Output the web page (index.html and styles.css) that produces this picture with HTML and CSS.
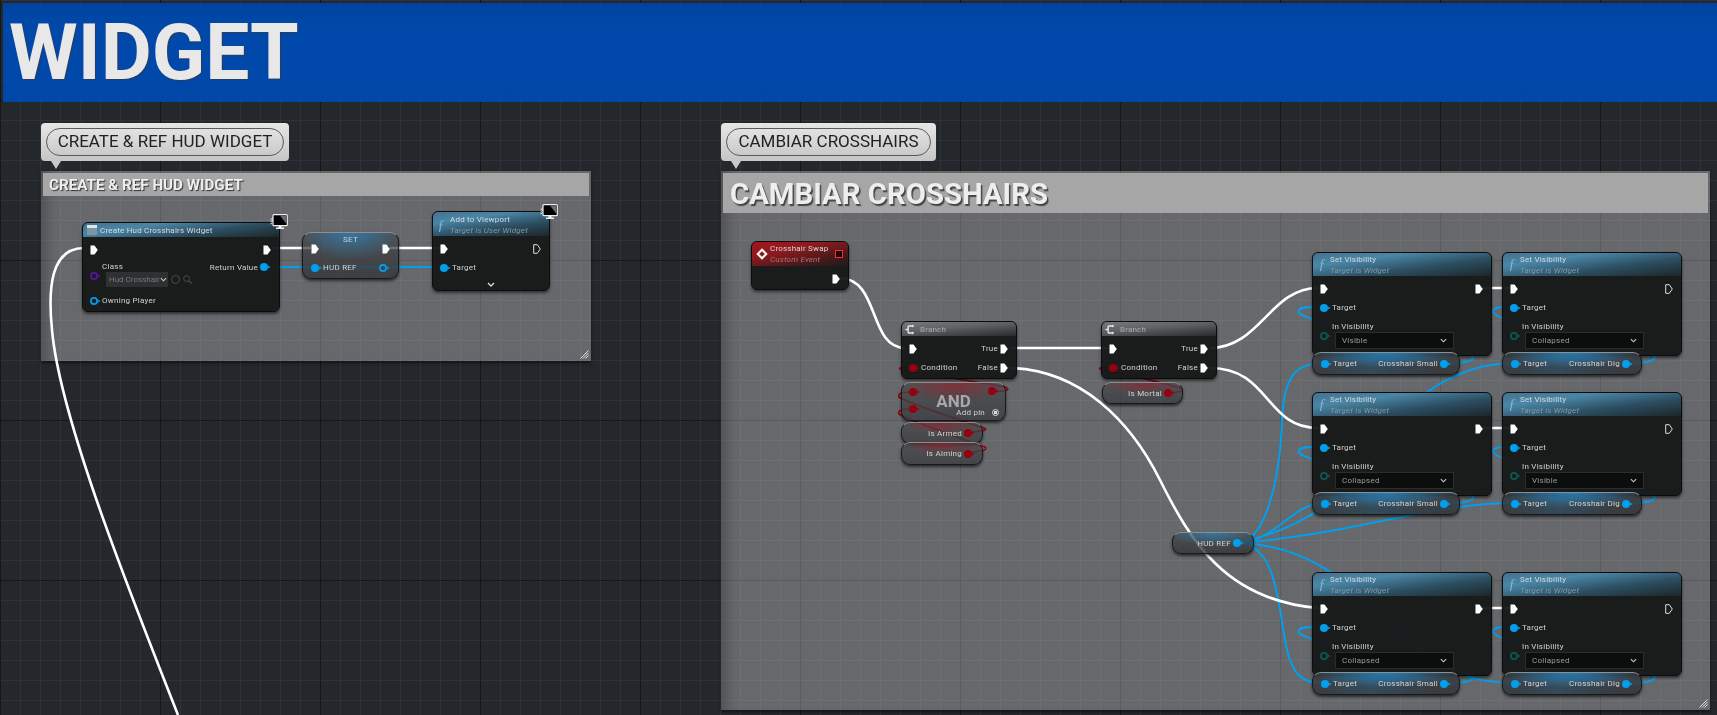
FILE: index.html
```html
<!DOCTYPE html>
<html lang="es">

<head>
  <meta charset="UTF-8">
  <title>Widget Blueprint</title>
  <link rel="stylesheet" href="styles.css">
</head>

<body>
  <svg class="defs" width="0" height="0">
    <symbol id="exec" viewBox="0 0 8 10"><path d="M0.5 0.5H4.5L7.8 5L4.5 9.5H0.5Z" fill="#fff"/></symbol>
    <symbol id="exec-off" viewBox="0 0 8 10"><path d="M0.7 0.7H4.3L7.3 5L4.3 9.3H0.7Z" fill="none" stroke="#ddd" stroke-width="1"/></symbol>
    <symbol id="data" viewBox="0 0 11 10"><circle cx="4" cy="5" r="4" fill="currentColor"/><path d="M8.2 3.4L10.6 5L8.2 6.6Z" fill="currentColor"/></symbol>
    <symbol id="data-off" viewBox="0 0 11 10"><circle cx="4" cy="5" r="3.1" fill="none" stroke="currentColor" stroke-width="1.7"/><path d="M8.2 3.6L10.4 5L8.2 6.4Z" fill="currentColor"/></symbol>
    <symbol id="monitor" viewBox="0 0 18 16">
      <path d="M0.5 6L3 3.5M0.5 8L3 6M0.5 10L2 9" stroke="#eee" stroke-width="1"/>
      <rect x="3" y="0.7" width="14.3" height="11" rx="1" fill="#000" stroke="#eee" stroke-width="1.2"/>
      <path d="M10 1.5H16.5V10Z" fill="#6a6d70"/>
      <path d="M8.5 12H11.5V13.6H14V15H6V13.6H8.5Z" fill="#eee"/>
    </symbol>
    <symbol id="branch" viewBox="0 0 14 14">
      <path d="M0.5 7H4M4 2.5V11.5M4 2.5H9M4 11.5H9" fill="none" stroke="#e8e8e8" stroke-width="1.8"/>
      <path d="M9 0.5L12 2.5L9 4.5ZM9 9.5L12 11.5L9 13.5Z" fill="#e8e8e8"/>
    </symbol>
    <symbol id="chevron" viewBox="0 0 8 5"><path d="M1 1L4 4L7 1" fill="none" stroke="currentColor" stroke-width="1.3"/></symbol>
    <symbol id="lens" viewBox="0 0 9 9"><circle cx="3.6" cy="3.6" r="2.9" fill="none" stroke="currentColor"/><path d="M5.7 5.7L8.5 8.5" stroke="currentColor" stroke-width="1.2"/></symbol>
    <symbol id="grip" viewBox="0 0 10 10"><path d="M9.5 1.5L1.5 9.5M9.5 4L4 9.5M9.5 6.5L6.5 9.5" stroke="#ddd" stroke-width="1"/></symbol>
  </svg>

  <div class="canvas">
    <div class="banner">WIDGET</div>

    <!-- comentarios -->
    <div class="bubble bubble-hud"><div class="bubble-pill">CREATE &amp; REF HUD WIDGET</div></div>
    <section class="comment comment-hud">
      <h2 class="comment-title">CREATE &amp; REF HUD WIDGET</h2>
      <svg class="grip"><use href="#grip"/></svg>
    </section>

    <div class="bubble bubble-cross"><div class="bubble-pill">CAMBIAR CROSSHAIRS</div></div>
    <section class="comment comment-cross">
      <h2 class="comment-title big">CAMBIAR CROSSHAIRS</h2>
      <svg class="grip"><use href="#grip"/></svg>
    </section>

    <!-- cables -->
    <svg class="wires" width="1717" height="715">
      <defs>
        <path id="loop-small" d="M1444 363C1470 364 1480 358 1468 354C1420 340 1290 322 1299 310C1302 306 1312 307 1324 307"/>
        <path id="loop-dig" d="M1627 363C1650 364 1662 358 1650 354C1600 340 1490 322 1493 311C1495 306 1505 307 1515 307"/>
      </defs>
      <g class="wire-blue">
        <path d="M270 267H443"/>
        <use href="#loop-small"/><use href="#loop-small" y="140"/><use href="#loop-small" y="320"/>
        <use href="#loop-dig"/><use href="#loop-dig" y="140"/><use href="#loop-dig" y="320"/>
        <path d="M1237 543C1265 543 1280 480 1282 420C1284 370 1300 363 1325 363"/>
        <path d="M1237 543C1280 540 1290 503 1325 503"/>
        <path d="M1237 543C1275 543 1278 600 1285 640C1292 680 1305 683 1325 683"/>
        <path d="M1237 543C1300 530 1350 500 1400 420C1425 385 1470 363 1515 363"/>
        <path d="M1237 543C1350 535 1430 503 1515 503"/>
        <path d="M1237 543C1330 545 1370 610 1420 650C1450 675 1480 683 1515 683"/>
      </g>
      <g class="wire-red">
        <path d="M967 433L980 431C988 430 987 428 980 427C960 420 905 402 899 397C897 393 904 392 913 392"/>
        <path d="M967 453L980 451C988 450 987 447 982 446C950 435 905 418 899 414C897 410 904 409 913 409"/>
        <path d="M992 391C1005 392 1012 390 1005 387C970 380 905 372 900 369C899 367 905 367 913 367"/>
        <path d="M1168 393C1180 392 1186 391 1180 388C1150 378 1106 372 1100 369C1099 367 1105 367 1113 367"/>
      </g>
      <g class="wire-white">
        <path d="M84 248C50 248 48 290 52 330C60 420 133 600 178 715"/>
        <path d="M272 248H311M390 248H441"/>
        <path d="M840 278C880 279 868 347 905 348"/>
        <path d="M1010 348H1108"/>
        <path d="M1010 368C1080 370 1130 420 1160 480C1190 540 1225 600 1318 608"/>
        <path d="M1210 348C1260 348 1270 288 1318 288"/>
        <path d="M1210 368C1270 368 1265 428 1318 428"/>
        <path d="M1482 288H1512M1482 428H1512M1482 608H1512"/>
      </g>
    </svg>

    <!-- nodos: crear widget -->
    <div class="node node-create">
      <div class="head head-blue head-thin"><span class="widget-icon"></span>Create Hud Crosshairs Widget</div>
      <div class="body">
        <div class="row"><svg class="pin-exec"><use href="#exec"/></svg><svg class="pin-exec"><use href="#exec"/></svg></div>
        <div class="row row-top">
          <div class="param">
            <span class="param-label">Class</span>
            <svg class="pin pin-class"><use href="#data-off"/></svg>
            <div class="class-line">
              <div class="select select-off">Hud Crosshair<svg class="chev"><use href="#chevron"/></svg></div>
              <span class="ring"></span>
              <svg class="lens"><use href="#lens"/></svg>
            </div>
          </div>
          <div class="pin-end">Return Value<svg class="pin"><use href="#data"/></svg></div>
        </div>
        <div class="row row-owner"><div class="pin-start"><svg class="pin"><use href="#data-off"/></svg>Owning Player</div></div>
      </div>
    </div>
    <svg class="monitor monitor-create"><use href="#monitor"/></svg>

    <div class="compact node-set">
      <div class="set-title">SET</div>
      <div class="row"><svg class="pin-exec"><use href="#exec"/></svg><svg class="pin-exec"><use href="#exec"/></svg></div>
      <div class="row"><div class="pin-start"><svg class="pin"><use href="#data"/></svg>HUD REF</div><svg class="pin"><use href="#data-off"/></svg></div>
    </div>

    <div class="node node-viewport">
      <div class="head head-blue">
        <span class="fn">ƒ</span>
        <div><div>Add to Viewport</div><div class="sub">Target is User Widget</div></div>
      </div>
      <div class="body">
        <div class="row"><svg class="pin-exec"><use href="#exec"/></svg><svg class="pin-exec"><use href="#exec-off"/></svg></div>
        <div class="row"><div class="pin-start"><svg class="pin"><use href="#data"/></svg>Target</div></div>
        <svg class="more"><use href="#chevron"/></svg>
      </div>
    </div>
    <svg class="monitor monitor-viewport"><use href="#monitor"/></svg>

    <!-- nodos: cambiar crosshairs -->
    <div class="node node-event">
      <div class="head head-red">
        <span class="event-icon"></span>
        <div><div>Crosshair Swap</div><div class="sub sub-red">Custom Event</div></div>
        <span class="event-stop"></span>
      </div>
      <div class="body"><div class="row row-end"><svg class="pin-exec"><use href="#exec"/></svg></div></div>
    </div>

    <div class="node node-branch branch-a">
      <div class="head head-grey head-thin"><svg class="branch-icon"><use href="#branch"/></svg>Branch</div>
      <div class="body">
        <div class="row"><svg class="pin-exec"><use href="#exec"/></svg><div class="pin-end">True<svg class="pin-exec"><use href="#exec"/></svg></div></div>
        <div class="row"><div class="pin-start red"><svg class="pin"><use href="#data"/></svg><span>Condition</span></div><div class="pin-end">False<svg class="pin-exec"><use href="#exec"/></svg></div></div>
      </div>
    </div>

    <div class="node node-branch branch-b">
      <div class="head head-grey head-thin"><svg class="branch-icon"><use href="#branch"/></svg>Branch</div>
      <div class="body">
        <div class="row"><svg class="pin-exec"><use href="#exec"/></svg><div class="pin-end">True<svg class="pin-exec"><use href="#exec"/></svg></div></div>
        <div class="row"><div class="pin-start red"><svg class="pin"><use href="#data"/></svg><span>Condition</span></div><div class="pin-end">False<svg class="pin-exec"><use href="#exec"/></svg></div></div>
      </div>
    </div>

    <div class="compact compact-red node-and">
      <div class="and-pins red">
        <svg class="pin"><use href="#data"/></svg>
        <svg class="pin"><use href="#data"/></svg>
      </div>
      <div class="and-text">AND</div>
      <div class="and-right">
        <svg class="pin red"><use href="#data"/></svg>
        <div class="add-pin">Add pin<span class="add-ring"></span></div>
      </div>
    </div>

    <div class="compact compact-red getter node-armed"><div class="pin-end red">Is Armed<svg class="pin"><use href="#data"/></svg></div></div>
    <div class="compact compact-red getter node-aiming"><div class="pin-end red">Is Aiming<svg class="pin"><use href="#data"/></svg></div></div>
    <div class="compact compact-red getter node-mortal"><div class="pin-end red">Is Mortal<svg class="pin"><use href="#data"/></svg></div></div>

    <div class="compact getter node-hud"><div class="pin-end">HUD REF<svg class="pin"><use href="#data"/></svg></div></div>

    <!-- set visibility, fila 1 -->
    <div class="node vis col-a row-1">
      <div class="head head-blue"><span class="fn">ƒ</span><div><div>Set Visibility</div><div class="sub">Target is Widget</div></div></div>
      <div class="body">
        <div class="row"><svg class="pin-exec"><use href="#exec"/></svg><svg class="pin-exec"><use href="#exec"/></svg></div>
        <div class="row"><div class="pin-start"><svg class="pin"><use href="#data"/></svg>Target</div></div>
        <div class="param param-vis">
          <span class="param-label">In Visibility</span>
          <svg class="pin pin-teal"><use href="#data-off"/></svg>
          <div class="select">Visible<svg class="chev"><use href="#chevron"/></svg></div>
        </div>
      </div>
    </div>
    <div class="node vis col-b row-1">
      <div class="head head-blue"><span class="fn">ƒ</span><div><div>Set Visibility</div><div class="sub">Target is Widget</div></div></div>
      <div class="body">
        <div class="row"><svg class="pin-exec"><use href="#exec"/></svg><svg class="pin-exec"><use href="#exec-off"/></svg></div>
        <div class="row"><div class="pin-start"><svg class="pin"><use href="#data"/></svg>Target</div></div>
        <div class="param param-vis">
          <span class="param-label">In Visibility</span>
          <svg class="pin pin-teal"><use href="#data-off"/></svg>
          <div class="select">Collapsed<svg class="chev"><use href="#chevron"/></svg></div>
        </div>
      </div>
    </div>
    <div class="compact getter-wide small col-a row-1-get"><div class="pin-start"><svg class="pin"><use href="#data"/></svg>Target</div><div class="pin-end">Crosshair Small<svg class="pin"><use href="#data"/></svg></div></div>
    <div class="compact getter-wide dig col-b row-1-get"><div class="pin-start"><svg class="pin"><use href="#data"/></svg>Target</div><div class="pin-end">Crosshair Dig<svg class="pin"><use href="#data"/></svg></div></div>

    <!-- fila 2 -->
    <div class="node vis col-a row-2">
      <div class="head head-blue"><span class="fn">ƒ</span><div><div>Set Visibility</div><div class="sub">Target is Widget</div></div></div>
      <div class="body">
        <div class="row"><svg class="pin-exec"><use href="#exec"/></svg><svg class="pin-exec"><use href="#exec"/></svg></div>
        <div class="row"><div class="pin-start"><svg class="pin"><use href="#data"/></svg>Target</div></div>
        <div class="param param-vis">
          <span class="param-label">In Visibility</span>
          <svg class="pin pin-teal"><use href="#data-off"/></svg>
          <div class="select">Collapsed<svg class="chev"><use href="#chevron"/></svg></div>
        </div>
      </div>
    </div>
    <div class="node vis col-b row-2">
      <div class="head head-blue"><span class="fn">ƒ</span><div><div>Set Visibility</div><div class="sub">Target is Widget</div></div></div>
      <div class="body">
        <div class="row"><svg class="pin-exec"><use href="#exec"/></svg><svg class="pin-exec"><use href="#exec-off"/></svg></div>
        <div class="row"><div class="pin-start"><svg class="pin"><use href="#data"/></svg>Target</div></div>
        <div class="param param-vis">
          <span class="param-label">In Visibility</span>
          <svg class="pin pin-teal"><use href="#data-off"/></svg>
          <div class="select">Visible<svg class="chev"><use href="#chevron"/></svg></div>
        </div>
      </div>
    </div>
    <div class="compact getter-wide small col-a row-2-get"><div class="pin-start"><svg class="pin"><use href="#data"/></svg>Target</div><div class="pin-end">Crosshair Small<svg class="pin"><use href="#data"/></svg></div></div>
    <div class="compact getter-wide dig col-b row-2-get"><div class="pin-start"><svg class="pin"><use href="#data"/></svg>Target</div><div class="pin-end">Crosshair Dig<svg class="pin"><use href="#data"/></svg></div></div>

    <!-- fila 3 -->
    <div class="node vis col-a row-3">
      <div class="head head-blue"><span class="fn">ƒ</span><div><div>Set Visibility</div><div class="sub">Target is Widget</div></div></div>
      <div class="body">
        <div class="row"><svg class="pin-exec"><use href="#exec"/></svg><svg class="pin-exec"><use href="#exec"/></svg></div>
        <div class="row"><div class="pin-start"><svg class="pin"><use href="#data"/></svg>Target</div></div>
        <div class="param param-vis">
          <span class="param-label">In Visibility</span>
          <svg class="pin pin-teal"><use href="#data-off"/></svg>
          <div class="select">Collapsed<svg class="chev"><use href="#chevron"/></svg></div>
        </div>
      </div>
    </div>
    <div class="node vis col-b row-3">
      <div class="head head-blue"><span class="fn">ƒ</span><div><div>Set Visibility</div><div class="sub">Target is Widget</div></div></div>
      <div class="body">
        <div class="row"><svg class="pin-exec"><use href="#exec"/></svg><svg class="pin-exec"><use href="#exec-off"/></svg></div>
        <div class="row"><div class="pin-start"><svg class="pin"><use href="#data"/></svg>Target</div></div>
        <div class="param param-vis">
          <span class="param-label">In Visibility</span>
          <svg class="pin pin-teal"><use href="#data-off"/></svg>
          <div class="select">Collapsed<svg class="chev"><use href="#chevron"/></svg></div>
        </div>
      </div>
    </div>
    <div class="compact getter-wide small col-a row-3-get"><div class="pin-start"><svg class="pin"><use href="#data"/></svg>Target</div><div class="pin-end">Crosshair Small<svg class="pin"><use href="#data"/></svg></div></div>
    <div class="compact getter-wide dig col-b row-3-get"><div class="pin-start"><svg class="pin"><use href="#data"/></svg>Target</div><div class="pin-end">Crosshair Dig<svg class="pin"><use href="#data"/></svg></div></div>
  </div>
</body>

</html>
```

FILE: styles.css
```css
body {
  margin: 0;
  background-color: #24272c;
  font-family: Roboto, "Liberation Sans", sans-serif;
}

.defs {
  position: absolute;
}

.canvas {
  position: relative;
  width: 1717px;
  height: 715px;
  box-sizing: border-box;
  padding: 3px 0 0 3px;
  overflow: hidden;
  filter: blur(0.35px);
  background-color: #24272c;
  background-image:
    linear-gradient(#14161a 1px, transparent 1px),
    linear-gradient(90deg, #14161a 1px, transparent 1px),
    linear-gradient(#2f3237 1px, transparent 1px),
    linear-gradient(90deg, #2f3237 1px, transparent 1px);
  background-size: 160px 160px, 160px 160px, 20px 20px, 20px 20px;
  background-position: 0 100px, 0 0, 0 0, 0 0;
}

.banner {
  height: 99px;
  box-sizing: border-box;
  padding: 4px 0 0 6px;
  background: linear-gradient(#0044a0, #0049ab 30%, #0047a8);
  color: #e8e8e8;
  font-size: 78.5px;
  font-weight: 700;
  line-height: 90px;
  text-shadow: 1px 1px 1px #2a3d5c;
}

/* burbujas de comentario */
.bubble {
  position: absolute;
  top: 123px;
  height: 38px;
  box-sizing: border-box;
  padding: 5px;
  border-radius: 4px;
  background: linear-gradient(#e6e6e6, #c6c6c6);
}

.bubble::after {
  content: "";
  position: absolute;
  left: 10px;
  top: 38px;
  border-left: 5px solid transparent;
  border-right: 5px solid transparent;
  border-top: 8px solid #c8c8c8;
}

.bubble-hud {
  left: 41px;
  width: 248px;
}

.bubble-cross {
  left: 721px;
  width: 215px;
}

.bubble-pill {
  height: 28px;
  box-sizing: border-box;
  border: 1.5px solid #5a5a5a;
  border-radius: 14px;
  background: linear-gradient(#e2e2e2, #cacaca);
  color: #222;
  font-size: 17px;
  line-height: 25px;
  text-align: center;
  white-space: nowrap;
}

/* cajas de comentario */
.comment {
  position: absolute;
  top: 171px;
  box-sizing: border-box;
  padding: 2px;
  background-color: rgba(255, 255, 255, 0.3);
  box-shadow: inset 14px 0 12px -8px rgba(0, 0, 0, 0.22), 0 2px 3px rgba(0, 0, 0, 0.5);
}

.comment-hud {
  left: 41px;
  width: 550px;
  height: 190px;
}

.comment-cross {
  left: 721px;
  width: 989px;
  height: 539px;
}

.comment-title {
  margin: 0;
  height: 23px;
  padding-left: 6px;
  background-color: #a6a6a6;
  color: #eee;
  font-size: 15.2px;
  font-weight: 700;
  line-height: 25px;
  text-shadow: 1px 1px 1px #333;
}

.comment-title.big {
  height: 40px;
  padding-left: 7px;
  font-size: 29.3px;
  line-height: 43px;
  text-shadow: 1.5px 1.5px 1px #444;
}

.grip {
  position: absolute;
  right: 2px;
  bottom: 2px;
  width: 10px;
  height: 10px;
}

/* cables */
.wires {
  position: absolute;
  left: 0;
  top: 0;
  fill: none;
}

.wire-white {
  stroke: #fff;
  stroke-width: 2.6;
}

.wire-blue {
  stroke: #00a0ee;
  stroke-width: 2;
}

.wire-red {
  stroke: #96000f;
  stroke-width: 1.7;
}

/* nodos */
.node {
  position: absolute;
  box-sizing: border-box;
  border: 1px solid #0b0c0d;
  border-radius: 6px;
  overflow: hidden;
  background-color: rgba(22, 24, 24, 0.95);
  box-shadow: 0 2px 3px rgba(0, 0, 0, 0.55);
  color: #d2d2d2;
  font-size: 8px;
  letter-spacing: 0.25px;
}

.head {
  display: flex;
  align-items: center;
  gap: 3px;
  height: 23px;
  box-sizing: border-box;
  padding-left: 4px;
  color: #d5dadd;
  font-size: 8px;
  font-weight: 400;
  letter-spacing: 0.2px;
  line-height: 11px;
}

.head-thin {
  height: 14px;
}

.head-blue {
  background: linear-gradient(172deg, #44728f 0%, #4a86a6 28%, #2c4f63 62%, #1d2629 100%);
}

.head-red {
  height: 24px;
  position: relative;
  background: linear-gradient(168deg, #a5151c 0%, #8e1a1e 35%, #4a1a1c 70%, #201a1a 100%);
}

.head-grey {
  background: linear-gradient(175deg, #77797b 0%, #5d5f60 45%, #28292a 100%);
  color: #a9abad;
}

.sub {
  color: #7f9ba3;
  font-style: italic;
}

.sub-red {
  color: #b8706f;
}

.fn {
  width: 10px;
  color: #7fb8dc;
  font-family: "Liberation Serif", serif;
  font-size: 14px;
  font-style: italic;
  text-align: center;
}

.widget-icon {
  width: 10px;
  height: 10px;
  border-top: 3px solid #dfe6ea;
  box-sizing: border-box;
  background-color: #7d95a5;
}

.branch-icon {
  width: 11px;
  height: 11px;
}

.event-icon {
  box-sizing: border-box;
  width: 8px;
  height: 8px;
  border: 2px solid #fff;
  transform: rotate(45deg);
}

.event-stop {
  position: absolute;
  right: 5px;
  top: 8px;
  width: 6px;
  height: 6px;
  border: 1px solid #ff2a2a;
  background-color: #1a0606;
}

.body {
  padding-top: 3px;
}

.row {
  display: flex;
  align-items: center;
  justify-content: space-between;
  height: 19px;
  padding: 0 8px 0 7px;
}

.row-end {
  justify-content: flex-end;
}

.row-top {
  align-items: flex-start;
  height: 31px;
  padding-top: 3px;
  box-sizing: border-box;
}

.row-owner {
  margin-top: 1px;
}

.pin-exec {
  flex: none;
  width: 8px;
  height: 10px;
}

.pin {
  flex: none;
  width: 11px;
  height: 10px;
  color: #00a0ee;
}

.red .pin,
.pin.red {
  color: #96000f;
}

.pin-class {
  color: #5a12a8;
  margin-top: -1px;
}

.pin-teal {
  color: #0b5a54;
  margin-top: -1px;
}

.pin-start,
.pin-end {
  display: flex;
  align-items: center;
  gap: 1px;
  color: #d2d2d2;
  white-space: nowrap;
}

.pin-end {
  gap: 2px;
}

.param {
  display: grid;
  grid-template-columns: 11px auto;
  column-gap: 1px;
}

.param-label {
  grid-column: 2;
  line-height: 10px;
}

.param-vis {
  margin: 5px 0 0 7px;
}

.select {
  display: flex;
  align-items: center;
  justify-content: space-between;
  box-sizing: border-box;
  width: 119px;
  height: 17px;
  margin-left: 3px;
  padding: 0 6px;
  border: 1px solid #2a2c2d;
  background-color: #0c0d0d;
  color: #9a9c9d;
}

.select-off {
  width: 62px;
  height: 15px;
  margin-left: 4px;
  padding: 0 3px;
  border: 0;
  background-color: #2e3031;
  color: #77797b;
  letter-spacing: 0;
  overflow: hidden;
  white-space: nowrap;
}

.class-line {
  display: flex;
  align-items: center;
  gap: 3px;
}

.ring {
  width: 7px;
  height: 7px;
  border: 1px solid #4a4c4d;
  border-radius: 50%;
}

.lens {
  width: 9px;
  height: 9px;
  color: #4a4c4d;
}

.chev {
  flex: none;
  width: 7px;
  height: 5px;
  color: #c8c8c8;
}

.more {
  display: block;
  width: 8px;
  height: 5px;
  margin: 5px auto 0;
  color: #ddd;
}

.monitor {
  position: absolute;
  width: 18px;
  height: 16px;
}

.monitor-create {
  left: 270px;
  top: 214px;
}

.monitor-viewport {
  left: 540px;
  top: 204px;
}

/* nodos compactos */
.compact {
  position: absolute;
  box-sizing: border-box;
  border: 1px solid #17191a;
  border-top-color: #8d9092;
  border-radius: 9px;
  background:
    radial-gradient(55% 60% at 50% 0, rgba(35, 150, 225, 0.55), transparent),
    linear-gradient(rgba(66, 68, 71, 0.7), rgba(50, 52, 55, 0.8));
  box-shadow: 0 2px 3px rgba(0, 0, 0, 0.6);
  color: #d2d2d2;
  font-size: 8px;
  letter-spacing: 0.25px;
}

.compact-red {
  background:
    radial-gradient(50% 55% at 50% 0, rgba(170, 20, 35, 0.55), transparent),
    linear-gradient(rgba(70, 72, 75, 0.7), rgba(58, 60, 63, 0.8));
}

.getter {
  display: flex;
  align-items: center;
  justify-content: flex-end;
  padding-right: 7px;
}

.getter-wide {
  display: flex;
  align-items: center;
  justify-content: space-between;
  height: 23px;
  padding: 0 8px 0 8px;
  background:
    linear-gradient(90deg, transparent, rgba(30, 130, 190, 0.22) 40%, transparent 85%),
    radial-gradient(50% 70% at 50% 0, rgba(35, 150, 225, 0.7), transparent),
    linear-gradient(rgba(56, 58, 61, 0.8), rgba(48, 50, 53, 0.85));
}

.set-title {
  height: 6px;
  line-height: 14px;
  text-align: center;
  color: #c9d2d8;
}

.node-create {
  left: 82px;
  top: 222px;
  width: 198px;
  height: 90px;
}

.node-set {
  left: 302px;
  top: 232px;
  width: 97px;
  height: 47px;
}

.node-set .row {
  padding: 0 8px;
}

.node-viewport {
  left: 432px;
  top: 211px;
  width: 118px;
  height: 80px;
}

.node-viewport .head {
  height: 24px;
  padding: 2px 0 0 3px;
  gap: 4px;
}

.node-event {
  left: 751px;
  top: 241px;
  width: 98px;
  height: 49px;
}

.node-event .head {
  padding-left: 6px;
  gap: 4px;
}

.node-branch {
  top: 321px;
  width: 116px;
  height: 58px;
}

.node-branch .head {
  padding-left: 3px;
  gap: 4px;
}

.branch-a {
  left: 901px;
}

.branch-b {
  left: 1101px;
}

.node-and {
  left: 901px;
  top: 382px;
  width: 105px;
  height: 39px;
}

.and-pins {
  position: absolute;
  left: 7px;
  top: 4px;
  display: flex;
  flex-direction: column;
  gap: 7px;
}

.and-text {
  padding-top: 11px;
  color: #a6a8aa;
  font-size: 17px;
  font-weight: 700;
  line-height: 14px;
  letter-spacing: 0;
  text-align: center;
}

.and-right {
  position: absolute;
  right: 6px;
  top: 3px;
  display: flex;
  flex-direction: column;
  align-items: flex-end;
  gap: 12px;
}

.add-pin {
  display: flex;
  align-items: center;
  gap: 7px;
  line-height: 9px;
  white-space: nowrap;
}

.add-ring {
  width: 5px;
  height: 5px;
  border: 1px solid #ddd;
  border-radius: 50%;
  background: radial-gradient(circle, #ddd 1.5px, transparent 2px);
}

.node-armed {
  left: 901px;
  top: 422px;
  width: 82px;
  height: 22px;
}

.node-aiming {
  left: 901px;
  top: 442px;
  width: 82px;
  height: 23px;
}

.node-mortal {
  left: 1102px;
  top: 382px;
  width: 81px;
  height: 22px;
}

.node-hud {
  left: 1172px;
  top: 532px;
  width: 82px;
  height: 22px;
  padding-right: 9px;
}

.vis {
  width: 180px;
  height: 104px;
}

.small {
  width: 148px;
}

.dig {
  width: 140px;
}

.col-a {
  left: 1312px;
}

.col-b {
  left: 1502px;
}

.row-1 {
  top: 252px;
}

.row-2 {
  top: 392px;
}

.row-3 {
  top: 572px;
}

.row-1-get {
  top: 352px;
}

.row-2-get {
  top: 492px;
}

.row-3-get {
  top: 672px;
}
```
